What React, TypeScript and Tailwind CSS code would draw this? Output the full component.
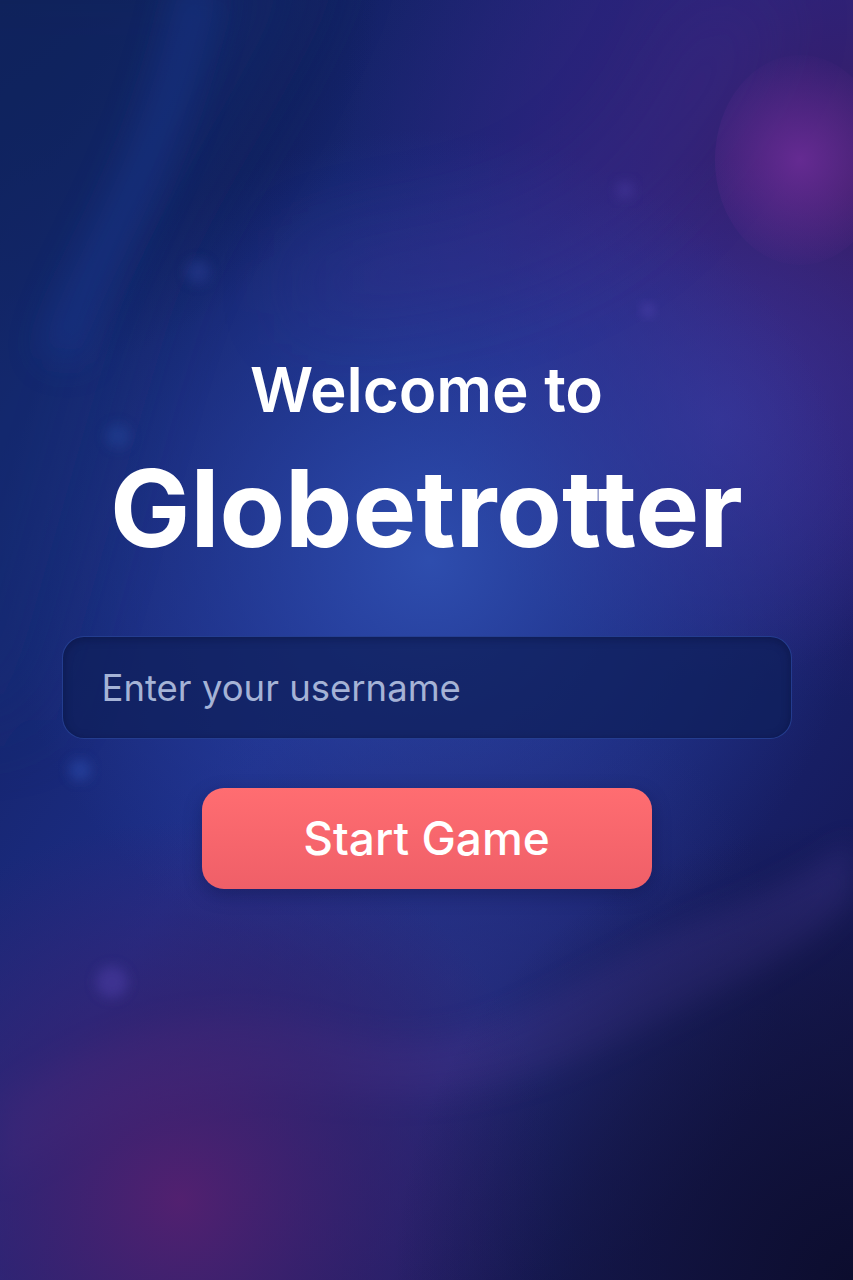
import React from "react";

function Background() {
  return (
    <svg
      className="absolute inset-0 h-full w-full"
      viewBox="0 0 853 1280"
      preserveAspectRatio="none"
      aria-hidden="true"
    >
      <defs>
        <linearGradient id="base" x1="0" y1="0" x2="1" y2="1">
          <stop offset="0" stopColor="#0b1848" />
          <stop offset="0.45" stopColor="#1d2e88" />
          <stop offset="1" stopColor="#13134a" />
        </linearGradient>
        <radialGradient id="glowC" cx="430" cy="560" r="430" gradientUnits="userSpaceOnUse">
          <stop offset="0" stopColor="#2f4fb0" stopOpacity="0.95" />
          <stop offset="0.6" stopColor="#2740a0" stopOpacity="0.45" />
          <stop offset="1" stopColor="#2740a0" stopOpacity="0" />
        </radialGradient>
        <radialGradient id="glowTR" cx="853" cy="180" r="520" gradientUnits="userSpaceOnUse">
          <stop offset="0" stopColor="#3a1d66" stopOpacity="1" />
          <stop offset="0.6" stopColor="#33207a" stopOpacity="0.6" />
          <stop offset="1" stopColor="#33207a" stopOpacity="0" />
        </radialGradient>
        <radialGradient id="glowMR" cx="720" cy="420" r="260" gradientUnits="userSpaceOnUse">
          <stop offset="0" stopColor="#3d3499" stopOpacity="0.8" />
          <stop offset="1" stopColor="#3d3499" stopOpacity="0" />
        </radialGradient>
        <radialGradient id="glowB" cx="450" cy="980" r="330" gradientUnits="userSpaceOnUse">
          <stop offset="0" stopColor="#2a3286" stopOpacity="0.7" />
          <stop offset="1" stopColor="#2a3286" stopOpacity="0" />
        </radialGradient>
        <radialGradient id="glowBL" cx="180" cy="1200" r="380" gradientUnits="userSpaceOnUse">
          <stop offset="0" stopColor="#55206f" stopOpacity="0.95" />
          <stop offset="0.5" stopColor="#3d1f6a" stopOpacity="0.6" />
          <stop offset="1" stopColor="#3d1f6a" stopOpacity="0" />
        </radialGradient>
        <radialGradient id="darkBR" cx="853" cy="1280" r="460" gradientUnits="userSpaceOnUse">
          <stop offset="0" stopColor="#0c0d2e" stopOpacity="1" />
          <stop offset="0.6" stopColor="#111238" stopOpacity="0.55" />
          <stop offset="1" stopColor="#111238" stopOpacity="0" />
        </radialGradient>
        <radialGradient id="darkTL" cx="0" cy="0" r="380" gradientUnits="userSpaceOnUse">
          <stop offset="0" stopColor="#0a1640" stopOpacity="1" />
          <stop offset="1" stopColor="#0a1640" stopOpacity="0" />
        </radialGradient>
        <radialGradient id="pink" cx="800" cy="160" r="110" gradientUnits="userSpaceOnUse">
          <stop offset="0" stopColor="#6a2c96" stopOpacity="0.9" />
          <stop offset="1" stopColor="#6a2c96" stopOpacity="0" />
        </radialGradient>
        <filter id="blur40" x="-50%" y="-50%" width="200%" height="200%">
          <feGaussianBlur stdDeviation="40" />
        </filter>
        <filter id="blur18" x="-50%" y="-50%" width="200%" height="200%">
          <feGaussianBlur stdDeviation="18" />
        </filter>
        <filter id="blur14" x="-50%" y="-50%" width="200%" height="200%">
          <feGaussianBlur stdDeviation="14" />
        </filter>
        <filter id="blur6" x="-50%" y="-50%" width="200%" height="200%">
          <feGaussianBlur stdDeviation="6" />
        </filter>
      </defs>

      <rect width="853" height="1280" fill="url(#base)" />
      <rect width="853" height="1280" fill="url(#glowTR)" />
      <rect width="853" height="1280" fill="url(#glowMR)" />
      <rect width="853" height="1280" fill="url(#glowC)" />
      <rect width="853" height="1280" fill="url(#glowB)" />
      <rect width="853" height="1280" fill="url(#darkTL)" />

      {/* left blue streak */}
      <path
        d="M330 -60 C270 100 180 200 140 330 C110 430 80 540 30 720 L-120 720 L-120 -60 Z"
        fill="#14307f"
        opacity="0.45"
        filter="url(#blur40)"
      />
      <path
        d="M200 -20 C180 80 150 160 110 240 C90 280 70 320 60 360"
        stroke="#1a3a96"
        strokeWidth="40"
        fill="none"
        opacity="0.45"
        filter="url(#blur18)"
      />
      {/* upper right purple sweep */}
      <path
        d="M690 0 C650 120 590 200 440 230 C380 240 320 250 300 260 L300 320 C420 310 560 300 660 200 C720 140 760 60 780 0 Z"
        fill="#3a2a86"
        opacity="0.35"
        filter="url(#blur40)"
      />
      <ellipse cx="800" cy="160" rx="85" ry="105" fill="url(#pink)" />

      {/* bottom waves */}
      <path
        d="M0 1100 C120 1020 220 1000 330 1030 C480 1070 560 980 700 920 C780 890 830 860 853 840 L853 900 C800 960 720 990 620 1040 C520 1090 420 1110 300 1090 C200 1080 100 1120 0 1180 Z"
        fill="#40358f"
        opacity="0.45"
        filter="url(#blur14)"
      />
      <rect width="853" height="1280" fill="url(#glowBL)" />
      <rect width="853" height="1280" fill="url(#darkBR)" />

      {/* bokeh dots */}
      <circle cx="625" cy="190" r="9" fill="#4a3aa0" opacity="0.5" filter="url(#blur6)" />
      <circle cx="198" cy="272" r="12" fill="#2a3d95" opacity="0.5" filter="url(#blur6)" />
      <circle cx="648" cy="310" r="6" fill="#5a48b8" opacity="0.6" filter="url(#blur6)" />
      <circle cx="118" cy="436" r="12" fill="#23459a" opacity="0.5" filter="url(#blur6)" />
      <circle cx="80" cy="770" r="11" fill="#2a4aa8" opacity="0.6" filter="url(#blur6)" />
      <circle cx="112" cy="982" r="16" fill="#4a3aa0" opacity="0.6" filter="url(#blur6)" />
    </svg>
  );
}

export default function App() {
  return (
    <div
      className="relative h-[1280px] w-full overflow-hidden"
      style={{ fontFamily: "Inter, 'Noto Sans', sans-serif" }}
    >
      <Background />
      <div className="relative flex flex-col items-center pt-[354px]">
        <h1 className="flex flex-col items-center text-white">
          <span className="text-[62px] font-semibold leading-[72px] tracking-[-0.1px]">
            Welcome to
          </span>
          <span className="mt-[22px] text-[107px] font-bold leading-[120px] tracking-[0px]">
            Globetrotter
          </span>
        </h1>
        <div className="mt-[68px] w-[730px]">
          <input
            type="text"
            placeholder="Enter your username"
            className="h-[103px] w-full rounded-[22px] border border-[#2c4aa3]/70 bg-[#0f1f5a]/75 px-[39px] text-[36.5px] text-white outline-none placeholder:text-[#a5b3d6] shadow-[inset_0_2px_10px_rgba(5,10,40,0.35)]"
          />
        </div>
        <button
          type="button"
          className="mt-[49px] h-[101px] w-[450px] rounded-[22px] bg-gradient-to-b from-[#ff6d71] to-[#ef5f68] text-[46px] font-medium text-white shadow-[0_6px_18px_rgba(10,15,60,0.35)]"
        >
          Start Game
        </button>
      </div>
    </div>
  );
}
